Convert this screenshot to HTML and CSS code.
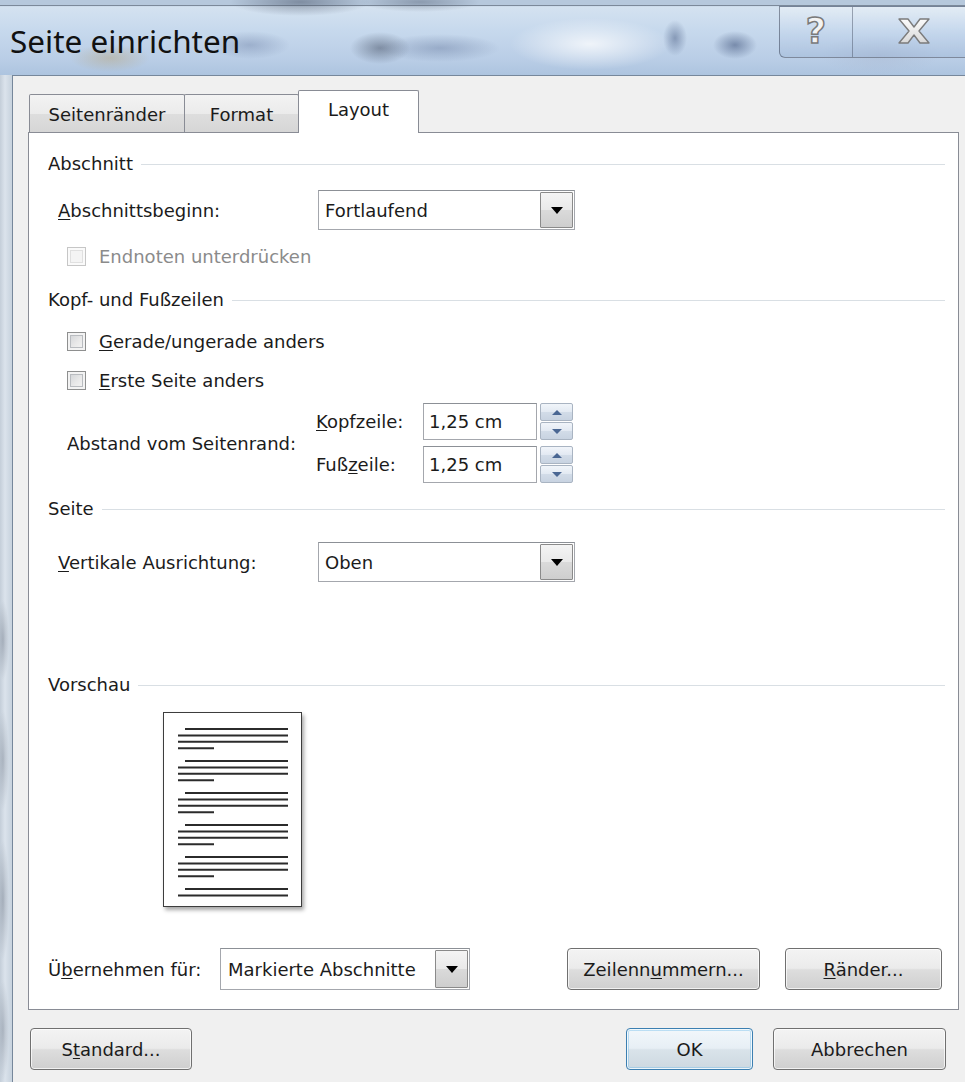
FILE: index.html
```html
<!DOCTYPE html>
<html lang="de">
<head>
<meta charset="utf-8">
<title>Seite einrichten</title>
<link rel="stylesheet" href="styles.css">
</head>
<body>
<div class="window">
  <div class="titlebar">
    <div class="title">Seite einrichten</div>
    <div class="caption-buttons">
      <div class="cap-btn cap-help"><span class="q-glyph">?</span></div>
      <div class="cap-btn cap-close">
        <svg width="32" height="26" viewBox="0 0 32 26">
          <defs>
            <linearGradient id="xfill" x1="0" y1="0" x2="0" y2="1">
              <stop offset="0" stop-color="#fbfbfb"/>
              <stop offset="1" stop-color="#d9d9d9"/>
            </linearGradient>
          </defs>
          <polygon points="1,1 10,1 16,9 22,1 31,1 21,13 31,25 22,25 16,17 10,25 1,25 11,13" fill="url(#xfill)" stroke="#7b7b7b" stroke-width="1.4" stroke-linejoin="round"/>
        </svg>
      </div>
    </div>
  </div>

  <div class="frame">
    <div class="client">
      <div class="tabs">
        <div class="tab tab-1">Seitenränder</div>
        <div class="tab tab-2">Format</div>
        <div class="tab tab-active">Layout</div>
      </div>

      <div class="panel">
        <div class="group-head"><span>Abschnitt</span><i class="rule"></i></div>

        <div class="field-row row-start">
          <label class="field-label"><u>A</u>bschnittsbeginn:</label>
          <div class="combo combo-wide">
            <span class="combo-text">Fortlaufend</span>
            <span class="combo-btn"><i class="tri-down"></i></span>
          </div>
        </div>

        <div class="check-row row-endnotes disabled">
          <span class="cb"></span><span>Endnoten unterdrücken</span>
        </div>

        <div class="group-head head-kopf"><span>Kopf- und Fußzeilen</span><i class="rule"></i></div>

        <div class="check-row row-even">
          <span class="cb"></span><span><u>G</u>erade/ungerade anders</span>
        </div>
        <div class="check-row row-first">
          <span class="cb"></span><span><u>E</u>rste Seite anders</span>
        </div>

        <div class="distance">
          <div class="distance-label">Abstand vom Seitenrand:</div>
          <div class="distance-fields">
            <div class="spin-row">
              <span class="spin-label"><u>K</u>opfzeile:</span>
              <span class="spin-input">1,25 cm</span>
              <span class="spinner"><b class="sp-up"><i class="tri-up-s"></i></b><b class="sp-down"><i class="tri-down-s"></i></b></span>
            </div>
            <div class="spin-row">
              <span class="spin-label">Fuß<u>z</u>eile:</span>
              <span class="spin-input">1,25 cm</span>
              <span class="spinner"><b class="sp-up"><i class="tri-up-s"></i></b><b class="sp-down"><i class="tri-down-s"></i></b></span>
            </div>
          </div>
        </div>

        <div class="group-head head-seite"><span>Seite</span><i class="rule"></i></div>

        <div class="field-row row-vertical">
          <label class="field-label"><u>V</u>ertikale Ausrichtung:</label>
          <div class="combo combo-wide">
            <span class="combo-text">Oben</span>
            <span class="combo-btn"><i class="tri-down"></i></span>
          </div>
        </div>

        <div class="group-head head-preview"><span>Vorschau</span><i class="rule"></i></div>

        <div class="preview-page">
          <svg width="139" height="195" viewBox="0 0 139 195">
            <g stroke="#2b2b2b" stroke-width="2">
              <!-- paragraph 1 -->
              <line x1="22" y1="17" x2="125" y2="17"/>
              <line x1="15" y1="23.4" x2="125" y2="23.4"/>
              <line x1="15" y1="29.8" x2="125" y2="29.8"/>
              <line x1="15" y1="36.2" x2="51" y2="36.2"/>
              <!-- paragraph 2 -->
              <line x1="22" y1="49" x2="125" y2="49"/>
              <line x1="15" y1="55.4" x2="125" y2="55.4"/>
              <line x1="15" y1="61.8" x2="125" y2="61.8"/>
              <line x1="15" y1="68.2" x2="51" y2="68.2"/>
              <!-- paragraph 3 -->
              <line x1="22" y1="81" x2="125" y2="81"/>
              <line x1="15" y1="87.4" x2="125" y2="87.4"/>
              <line x1="15" y1="93.8" x2="125" y2="93.8"/>
              <line x1="15" y1="100.2" x2="51" y2="100.2"/>
              <!-- paragraph 4 -->
              <line x1="22" y1="113" x2="125" y2="113"/>
              <line x1="15" y1="119.4" x2="125" y2="119.4"/>
              <line x1="15" y1="125.8" x2="125" y2="125.8"/>
              <line x1="15" y1="132.2" x2="51" y2="132.2"/>
              <!-- paragraph 5 -->
              <line x1="22" y1="145" x2="125" y2="145"/>
              <line x1="15" y1="151.4" x2="125" y2="151.4"/>
              <line x1="15" y1="157.8" x2="125" y2="157.8"/>
              <line x1="15" y1="164.2" x2="51" y2="164.2"/>
              <!-- paragraph 6 -->
              <line x1="22" y1="177" x2="125" y2="177"/>
              <line x1="15" y1="183.4" x2="125" y2="183.4"/>
            </g>
          </svg>
        </div>

        <div class="apply-row">
          <span class="apply-label">Ü<u>b</u>ernehmen für:</span>
          <div class="combo combo-apply">
            <span class="combo-text">Markierte Abschnitte</span>
            <span class="combo-btn"><i class="tri-down"></i></span>
          </div>
          <button class="btn btn-lines">Zeilenn<u>u</u>mmern...</button>
          <button class="btn btn-borders"><u>R</u>änder...</button>
        </div>
      </div>

      <div class="footer">
        <button class="btn btn-standard">S<u>t</u>andard...</button>
        <button class="btn btn-ok">OK</button>
        <button class="btn btn-cancel">Abbrechen</button>
      </div>
    </div>
  </div>
</div>
</body>
</html>
```

FILE: styles.css
```css
* { box-sizing: border-box; }

html, body {
  margin: 0;
  padding: 0;
}

body {
  width: 965px;
  height: 1082px;
  overflow: hidden;
  font-family: "DejaVu Sans", "Liberation Sans", sans-serif;
  font-size: 18px;
  color: #1b1b1b;
  background:
    radial-gradient(ellipse 6px 40px at 3px 640px, rgba(110,120,135,0.45), transparent),
    radial-gradient(ellipse 6px 50px at 3px 760px, rgba(110,120,135,0.4), transparent),
    radial-gradient(ellipse 6px 60px at 3px 900px, rgba(110,120,135,0.45), transparent),
    radial-gradient(ellipse 6px 50px at 3px 1030px, rgba(110,120,135,0.4), transparent),
    linear-gradient(90deg, #c4ced9 0px, #dbe3ec 5px, #c9d4df 11px);
}

u {
  text-decoration: underline;
  text-underline-offset: 2px;
  text-decoration-thickness: 1px;
}

.window {
  display: flex;
  flex-direction: column;
  height: 1082px;
}

/* ---------- glass caption ---------- */
.titlebar {
  height: 75px;
  flex: none;
  display: flex;
  justify-content: space-between;
  align-items: flex-start;
  background:
    linear-gradient(180deg, rgba(70,80,95,0.55) 0px, rgba(70,80,95,0.55) 1px, transparent 1px) 0 5px / 100% 2px no-repeat,
    radial-gradient(ellipse 70px 14px at 300px 2px, rgba(60,70,90,0.45), transparent),
    radial-gradient(ellipse 60px 10px at 420px 2px, rgba(60,70,90,0.35), transparent),
    radial-gradient(ellipse 40px 14px at 110px 58px, rgba(180,150,90,0.35), transparent),
    radial-gradient(ellipse 40px 14px at 250px 45px, rgba(90,110,150,0.35), transparent),
    radial-gradient(ellipse 30px 16px at 380px 48px, rgba(50,60,80,0.45), transparent),
    radial-gradient(ellipse 60px 14px at 440px 48px, rgba(80,100,140,0.35), transparent),
    radial-gradient(ellipse 80px 26px at 590px 44px, rgba(255,255,255,0.75), transparent),
    radial-gradient(ellipse 12px 18px at 675px 38px, rgba(60,80,120,0.45), transparent),
    radial-gradient(ellipse 22px 14px at 735px 45px, rgba(60,80,120,0.55), transparent),
    radial-gradient(ellipse 60px 20px at 880px 55px, rgba(170,185,210,0.5), transparent),
    linear-gradient(180deg, #b6c8dc 0px, #b6c8dc 5px, #d4e2f0 7px, #c7d9ed 30px, #b9cde6 60px, #adc4df 75px);
}

.title {
  margin: 25px 0 0 10px;
  font-family: "Noto Sans", "Open Sans", sans-serif;
  font-size: 31.5px;
  line-height: 1;
  letter-spacing: 0;
  color: #111;
}

.caption-buttons {
  display: flex;
  margin-top: 6px;
  height: 52px;
  border: 1px solid rgba(70,80,100,0.6);
  border-right: none;
  border-radius: 0 0 0 6px;
  background: linear-gradient(180deg, rgba(255,255,255,0.35), rgba(190,210,235,0.35) 55%, rgba(150,175,210,0.35));
}

.cap-btn {
  display: flex;
  align-items: center;
  justify-content: center;
}

.cap-help {
  width: 73px;
  border-right: 1px solid rgba(80,90,110,0.5);
}

.cap-close {
  width: 112px;
  padding-left: 10px;
  padding-bottom: 2px;
}

.q-glyph {
  font-family: "DejaVu Sans", sans-serif;
  font-weight: bold;
  font-size: 35px;
  line-height: 1;
  color: #f3f3f3;
  -webkit-text-stroke: 1.5px #7a7a7a;
  margin-top: -1px;
}

/* ---------- dialog body ---------- */
.frame {
  flex: 1;
  display: flex;
  padding-left: 12px;
  min-height: 0;
}

.client {
  flex: 1;
  display: flex;
  flex-direction: column;
  background: #f0f0f0;
  border-left: 1px solid #76879b;
  border-top: 1px solid #76879b;
  padding: 14px 0 0 15px;
}

.tabs {
  display: flex;
  align-items: flex-end;
  height: 42px;
  padding-left: 1px;
  position: relative;
  z-index: 1;
}

.tab {
  height: 38px;
  display: flex;
  align-items: center;
  justify-content: center;
  border: 1px solid #898c95;
  border-bottom: none;
  border-radius: 2px 2px 0 0;
  background: linear-gradient(180deg, #f3f3f3 0%, #ebebeb 50%, #dedede 51%, #d6d6d6 100%);
  padding-top: 1px;
}

.tab-1 { width: 156px; }
.tab-2 { width: 115px; margin-left: -1px; }

.tab-active {
  width: 121px;
  height: 43px;
  margin-left: -1px;
  margin-bottom: -1px;
  background: #fff;
  padding-top: 0;
  padding-bottom: 5px;
}

.panel {
  width: 931px;
  height: 878px;
  flex: none;
  background: #fff;
  border: 1px solid #898c95;
  padding: 20px 13px 19px 19px;
  display: flex;
  flex-direction: column;
}

.group-head {
  height: 22px;
  display: flex;
  align-items: center;
  gap: 8px;
  line-height: 22px;
}

.rule {
  flex: 1;
  height: 1px;
  background: #d9dfe4;
}

.head-kopf { margin-top: 18px; }
.head-seite { margin-top: 15px; }
.head-preview { margin-top: 92px; }

/* label + combo rows */
.field-row {
  display: flex;
  align-items: center;
  height: 40px;
  padding-left: 10px;
}

.row-start { margin-top: 15px; }
.row-vertical { margin-top: 22px; }

.field-label {
  width: 260px;
}

.combo {
  display: flex;
  align-items: stretch;
  background: #fff;
  border: 1px solid #a4a7ad;
  border-top-color: #8c9096;
}

.combo-wide {
  width: 257px;
  height: 40px;
}

.combo-text {
  flex: 1;
  display: flex;
  align-items: center;
  padding-left: 6px;
  white-space: nowrap;
}

.combo-btn {
  width: 33px;
  margin: 1px;
  border: 1px solid #8a8a8a;
  border-radius: 1px;
  background: linear-gradient(180deg, #f4f4f4 0%, #e9e9e9 50%, #dadada 51%, #cecece 100%);
  display: flex;
  align-items: center;
  justify-content: center;
}

.tri-down {
  width: 0;
  height: 0;
  border-left: 6px solid transparent;
  border-right: 6px solid transparent;
  border-top: 7px solid #000;
}

/* checkboxes */
.check-row {
  display: flex;
  align-items: center;
  height: 30px;
  padding-left: 19px;
  gap: 13px;
}

.row-endnotes { margin-top: 11px; }
.row-even { margin-top: 15px; }
.row-first { margin-top: 9px; }

.cb {
  width: 19px;
  height: 19px;
  flex: none;
  border: 1px solid #8e8f8f;
  background: linear-gradient(135deg, #cdd0d4 0%, #e9e9e9 55%, #f7f7f7 100%);
  box-shadow: inset 0 0 0 2px #f3f3f3, inset 0 0 0 3px #b9bcc0;
}

.disabled { color: #8b8b8b; }

.disabled .cb {
  border-color: #c6c6c6;
  background: #f4f4f4;
  box-shadow: inset 0 0 0 2px #fafafa, inset 0 0 0 3px #e0e0e0;
}

/* distance from margin */
.distance {
  display: flex;
  align-items: center;
  margin-top: 8px;
  padding-left: 19px;
}

.distance-label {
  width: 249px;
  padding-top: 1px;
}

.distance-fields {
  display: flex;
  flex-direction: column;
  gap: 6px;
}

.spin-row {
  display: flex;
  align-items: center;
  height: 37px;
}

.spin-label {
  width: 107px;
}

.spin-input {
  width: 114px;
  height: 37px;
  display: flex;
  align-items: center;
  padding-left: 5px;
  border: 1px solid #a4a7ad;
  border-top-color: #8c9096;
  background: #fff;
}

.spinner {
  width: 33px;
  height: 37px;
  margin-left: 3px;
  display: flex;
  flex-direction: column;
  gap: 1px;
}

.spinner b {
  flex: 1;
  display: flex;
  align-items: center;
  justify-content: center;
  border: 1px solid #a9b4c2;
  border-radius: 2px;
  background: linear-gradient(180deg, #f1f5fa 0%, #e2e9f2 50%, #d2dce8 51%, #c8d3e1 100%);
}

.tri-up-s {
  width: 0;
  height: 0;
  border-left: 5px solid transparent;
  border-right: 5px solid transparent;
  border-bottom: 5px solid #4a6793;
}

.tri-down-s {
  width: 0;
  height: 0;
  border-left: 5px solid transparent;
  border-right: 5px solid transparent;
  border-top: 5px solid #4a6793;
}

/* preview */
.preview-page {
  width: 139px;
  height: 195px;
  margin: 16px 0 0 115px;
  background: #fff;
  border: 1px solid #3d3d3d;
  box-shadow: 2px 3px 4px rgba(0,0,0,0.35);
}

.preview-page svg {
  display: block;
  margin: -1px 0 0 -1px;
}

/* apply row */
.apply-row {
  margin-top: auto;
  display: flex;
  align-items: center;
  height: 42px;
  padding-right: 3px;
}

.apply-label {
  width: 172px;
}

.combo-apply {
  width: 250px;
  height: 42px;
}

.combo-apply .combo-text { padding-left: 7px; }

.btn-lines {
  margin-left: auto;
  width: 193px;
}

.btn-borders {
  margin-left: 25px;
  width: 157px;
}

/* push buttons */
.btn {
  height: 42px;
  font-family: "DejaVu Sans", "Liberation Sans", sans-serif;
  font-size: 18px;
  color: #1b1b1b;
  border: 1px solid #707070;
  border-radius: 4px;
  background: linear-gradient(180deg, #f3f3f3 0%, #ebebeb 48%, #dddddd 52%, #cfcfcf 100%);
  box-shadow: inset 0 0 0 1px rgba(255,255,255,0.7);
  padding: 0;
}

.footer {
  display: flex;
  align-items: center;
  margin-top: 18px;
  padding-left: 2px;
}

.btn-standard { width: 162px; }

.btn-ok {
  width: 127px;
  margin-left: auto;
  border-color: #3c7fb1;
  background: linear-gradient(180deg, #f2f7fb 0%, #e7eff5 48%, #d9e3ea 52%, #cdd8e0 100%);
  box-shadow: inset 0 0 0 1px rgba(255,255,255,0.8), inset 0 0 0 2px rgba(120,190,235,0.45);
}

.btn-cancel {
  width: 173px;
  margin-left: 20px;
  margin-right: 19px;
}
```
